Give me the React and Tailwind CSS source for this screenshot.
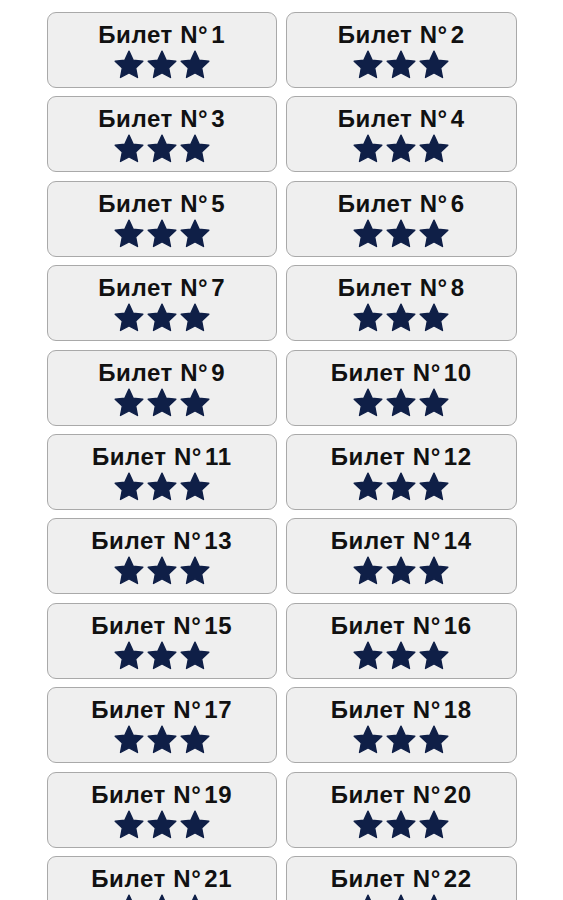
const tickets = Array.from({ length: 22 }, (_, i) => i + 1);

function Star() {
  return (
    <svg viewBox="0 0 24 24" className="w-[34px] h-[32px] -mx-[0.5px]">
      <path
        d="M12 1.6l3.1 6.7 7.3.9-5.4 5 1.4 7.2L12 17.9l-6.4 3.5 1.4-7.2-5.4-5 7.3-.9z"
        fill="#0f1f47"
        stroke="#0f1f47"
        strokeWidth="1"
        strokeLinejoin="round"
      />
    </svg>
  );
}

export default function App() {
  return (
    <div className="bg-white min-h-screen pt-3" style={{ fontFamily: '"Liberation Sans", Arial, sans-serif' }}>
      <div className="w-[470px] mx-auto grid grid-cols-2 gap-x-[9px] gap-y-[8.4px]">
        {tickets.map((n) => (
          <div
            key={n}
            className="h-[76px] bg-[#efefef] border border-[#a9a9a9] rounded-[9px] flex flex-col items-center pt-[7px]"
          >
            <div className="text-[24px] font-bold text-[#111] leading-[30px] tracking-[0.6px]">
              Билет N°<span className="ml-[3px]">{n}</span>
            </div>
            <div className="flex items-center -mt-[1px]">
              <Star />
              <Star />
              <Star />
            </div>
          </div>
        ))}
      </div>
    </div>
  );
}
